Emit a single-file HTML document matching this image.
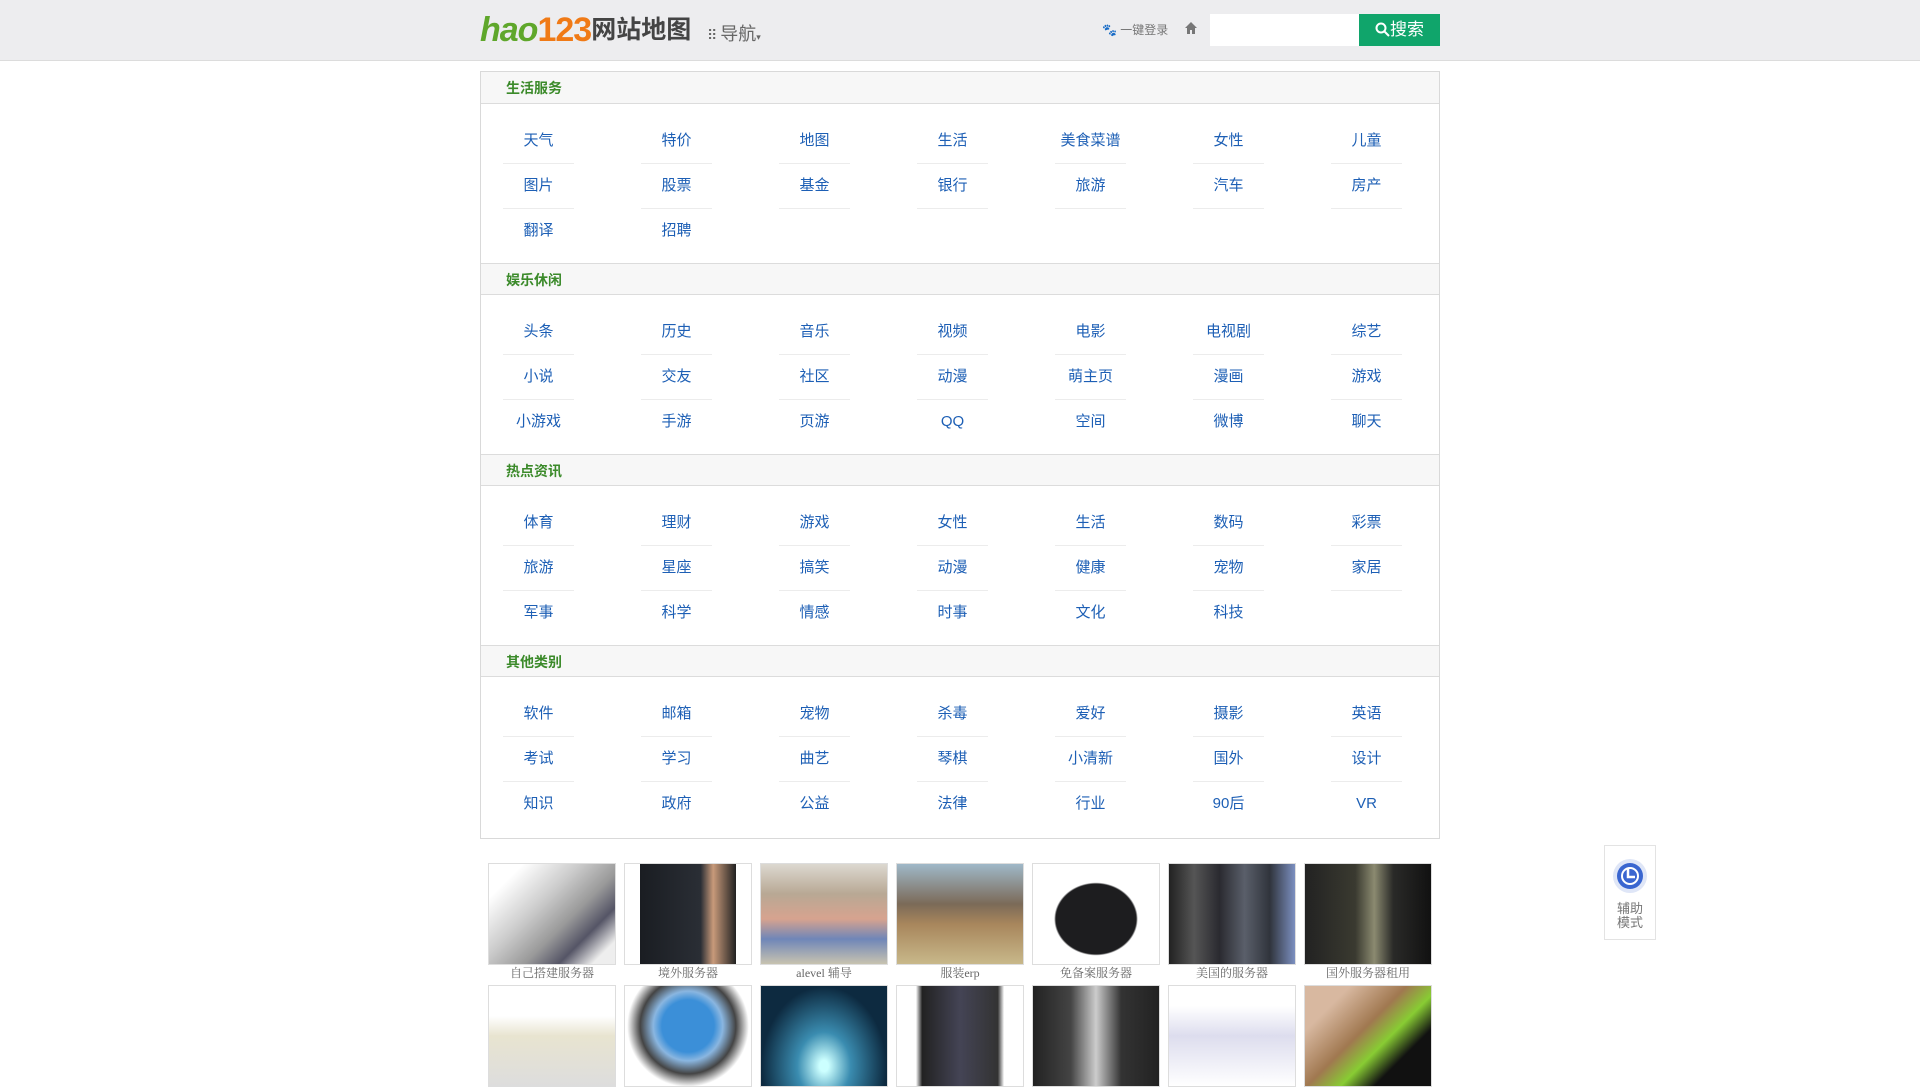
<!DOCTYPE html>
<html><head><meta charset="utf-8"><style>
*{margin:0;padding:0;box-sizing:border-box}
body{width:1920px;height:1040px;overflow:hidden;background:#fff;font-family:"Liberation Sans","Noto Sans CJK SC",sans-serif;position:relative}
.hd{height:61px;background:#ededef;border-bottom:1px solid #dcdcdc;position:relative}
.logo{position:absolute;left:480px;top:12px;font-size:34px;font-weight:bold;font-style:italic;letter-spacing:-1px;line-height:36px}
.logo .h{color:#5fa72b}.logo .n{color:#f07a16;font-style:normal}
.logo .t{color:#444;font-style:normal;font-size:25px;letter-spacing:0;vertical-align:3px}
.nav{position:absolute;left:707px;top:20px;font-size:18px;color:#666}
.login{position:absolute;left:1102px;top:21px;font-size:12px;color:#777}
.home{position:absolute;left:1184px;top:21px}
.inp{position:absolute;left:1210px;top:14px;width:149px;height:32px;background:#fff}
.btn{position:absolute;left:1359px;top:14px;width:81px;height:32px;background:#10a56b;color:#fff;font-size:17px;line-height:32px;text-align:center}
.box{position:absolute;left:480px;top:71px;width:960px;border:1px solid #d9d9d9}
.sh{height:32px;background:#f7f7f7;border-bottom:1px solid #dcdcdc;color:#3b8a2a;font-weight:bold;font-size:14px;line-height:32px;padding-left:25px}
.sec+.sec .sh{border-top:1px solid #dcdcdc}
.sc{height:159px;padding-top:15px}
.row{height:45px;display:flex;overflow:visible}
.c{width:138px;flex:0 0 138px}
.c a{display:block;margin-left:22px;width:71px;height:45px;line-height:44px;text-align:center;color:#1d5fb5;font-size:15px;text-decoration:none;border-bottom:1px solid #ececec}
.imgs{position:absolute;left:488px;top:863px}
.it{position:absolute;width:128px;height:102px;border:1px solid #ddd}
.cap{position:absolute;width:128px;text-align:center;font-size:12px;color:#666;font-family:"Liberation Serif","Noto Serif CJK SC",serif}
.acc{position:absolute;left:1604px;top:845px;width:52px;height:95px;border:1px solid #e3e3e3;background:#fff;text-align:center}
</style></head><body>
<div class="hd">
<div class="logo"><span class="h">hao</span><span class="n">123</span><span class="t">网站地图</span></div>
<div class="nav"><span style="font-size:14px;letter-spacing:-2px">⠿</span> 导航<span style="font-size:9px">▾</span></div>
<div class="login">🐾 一键登录</div>
<svg class="home" width="14" height="14" viewBox="0 0 14 14"><path d="M7 1L1 7h2v6h3V9h2v4h3V7h2z" fill="#777"/></svg>
<div class="inp"></div>
<div class="btn"><svg width="15" height="15" viewBox="0 0 15 15" style="vertical-align:-2px"><circle cx="6" cy="6" r="4.5" stroke="#fff" stroke-width="2" fill="none"/><path d="M9.5 9.5L14 14" stroke="#fff" stroke-width="2"/></svg>搜索</div>
</div>
<div class="box">
<div class="sec"><div class="sh">生活服务</div><div class="sc">
<div class="row"><div class="c"><a>天气</a></div><div class="c"><a>特价</a></div><div class="c"><a>地图</a></div><div class="c"><a>生活</a></div><div class="c"><a>美食菜谱</a></div><div class="c"><a>女性</a></div><div class="c"><a>儿童</a></div></div>
<div class="row"><div class="c"><a>图片</a></div><div class="c"><a>股票</a></div><div class="c"><a>基金</a></div><div class="c"><a>银行</a></div><div class="c"><a>旅游</a></div><div class="c"><a>汽车</a></div><div class="c"><a>房产</a></div></div>
<div class="row"><div class="c"><a style="border:0">翻译</a></div><div class="c"><a style="border:0">招聘</a></div></div>
</div></div>
<div class="sec"><div class="sh">娱乐休闲</div><div class="sc">
<div class="row"><div class="c"><a>头条</a></div><div class="c"><a>历史</a></div><div class="c"><a>音乐</a></div><div class="c"><a>视频</a></div><div class="c"><a>电影</a></div><div class="c"><a>电视剧</a></div><div class="c"><a>综艺</a></div></div>
<div class="row"><div class="c"><a>小说</a></div><div class="c"><a>交友</a></div><div class="c"><a>社区</a></div><div class="c"><a>动漫</a></div><div class="c"><a>萌主页</a></div><div class="c"><a>漫画</a></div><div class="c"><a>游戏</a></div></div>
<div class="row"><div class="c"><a style="border:0">小游戏</a></div><div class="c"><a style="border:0">手游</a></div><div class="c"><a style="border:0">页游</a></div><div class="c"><a style="border:0">QQ</a></div><div class="c"><a style="border:0">空间</a></div><div class="c"><a style="border:0">微博</a></div><div class="c"><a style="border:0">聊天</a></div></div>
</div></div>
<div class="sec"><div class="sh">热点资讯</div><div class="sc">
<div class="row"><div class="c"><a>体育</a></div><div class="c"><a>理财</a></div><div class="c"><a>游戏</a></div><div class="c"><a>女性</a></div><div class="c"><a>生活</a></div><div class="c"><a>数码</a></div><div class="c"><a>彩票</a></div></div>
<div class="row"><div class="c"><a>旅游</a></div><div class="c"><a>星座</a></div><div class="c"><a>搞笑</a></div><div class="c"><a>动漫</a></div><div class="c"><a>健康</a></div><div class="c"><a>宠物</a></div><div class="c"><a>家居</a></div></div>
<div class="row"><div class="c"><a style="border:0">军事</a></div><div class="c"><a style="border:0">科学</a></div><div class="c"><a style="border:0">情感</a></div><div class="c"><a style="border:0">时事</a></div><div class="c"><a style="border:0">文化</a></div><div class="c"><a style="border:0">科技</a></div></div>
</div></div>
<div class="sec"><div class="sh">其他类别</div><div class="sc" style="height:161px">
<div class="row"><div class="c"><a>软件</a></div><div class="c"><a>邮箱</a></div><div class="c"><a>宠物</a></div><div class="c"><a>杀毒</a></div><div class="c"><a>爱好</a></div><div class="c"><a>摄影</a></div><div class="c"><a>英语</a></div></div>
<div class="row"><div class="c"><a>考试</a></div><div class="c"><a>学习</a></div><div class="c"><a>曲艺</a></div><div class="c"><a>琴棋</a></div><div class="c"><a>小清新</a></div><div class="c"><a>国外</a></div><div class="c"><a>设计</a></div></div>
<div class="row"><div class="c"><a style="border:0">知识</a></div><div class="c"><a style="border:0">政府</a></div><div class="c"><a style="border:0">公益</a></div><div class="c"><a style="border:0">法律</a></div><div class="c"><a style="border:0">行业</a></div><div class="c"><a style="border:0">90后</a></div><div class="c"><a style="border:0">VR</a></div></div>
</div></div>
</div>
<div class="imgs">
<div class="it" style="left:0;top:0;background:linear-gradient(135deg,#fff 15%,#ccc 40%,#999 60%,#556 75%,#eee 90%)"></div>
<div class="it" style="left:136px;top:0;background:linear-gradient(90deg,#fff 12%,#1a1d22 12%,#2a2e35 60%,#c89a7a 70%,#222 88%,#fff 88%)"></div>
<div class="it" style="left:272px;top:0;background:linear-gradient(180deg,#dcd8d0 0%,#b8a894 30%,#d7a38f 55%,#6f86b8 75%,#c8c3b0 100%)"></div>
<div class="it" style="left:408px;top:0;background:linear-gradient(180deg,#9fb8c8 0%,#7b6a58 40%,#a8865c 60%,#c8b88a 100%)"></div>
<div class="it" style="left:544px;top:0;background:radial-gradient(ellipse at 50% 55%,#1d1d1f 45%,#fff 47%)"></div>
<div class="it" style="left:680px;top:0;background:linear-gradient(90deg,#222 0%,#555 20%,#2a2a30 40%,#5a5f6a 60%,#30343c 80%,#7b8fc0 100%)"></div>
<div class="it" style="left:816px;top:0;background:linear-gradient(90deg,#222 0%,#3a3a30 40%,#8b8a70 55%,#2a2a28 70%,#111 100%)"></div>
<div class="cap" style="left:0;top:101px">自己搭建服务器</div>
<div class="cap" style="left:136px;top:101px">境外服务器</div>
<div class="cap" style="left:272px;top:101px">alevel 辅导</div>
<div class="cap" style="left:408px;top:101px">服装erp</div>
<div class="cap" style="left:544px;top:101px">免备案服务器</div>
<div class="cap" style="left:680px;top:101px">美国的服务器</div>
<div class="cap" style="left:816px;top:101px">国外服务器租用</div>
<div class="it" style="left:0;top:122px;background:linear-gradient(180deg,#fff 30%,#e8e4d0 50%,#ddd 100%)"></div>
<div class="it" style="left:136px;top:122px;background:radial-gradient(circle at 50% 40%,#3b8fd8 30%,#8ab6e0 40%,#444 55%,#fff 70%)"></div>
<div class="it" style="left:272px;top:122px;background:radial-gradient(ellipse at 50% 80%,#cff 5%,#3a8cb0 30%,#0d2a40 70%)"></div>
<div class="it" style="left:408px;top:122px;background:linear-gradient(90deg,#fff 15%,#222 20%,#445 50%,#333 80%,#fff 85%)"></div>
<div class="it" style="left:544px;top:122px;background:linear-gradient(90deg,#222 0%,#444 30%,#ccc 50%,#333 70%,#222 100%)"></div>
<div class="it" style="left:680px;top:122px;background:linear-gradient(180deg,#fff 20%,#dde 50%,#fff 100%)"></div>
<div class="it" style="left:816px;top:122px;background:linear-gradient(135deg,#d8b8a0 20%,#a07850 45%,#8c3 60%,#111 75%)"></div>
</div>
<div class="acc">
<svg width="36" height="36" viewBox="0 0 36 36" style="margin-top:12px"><circle cx="18" cy="18" r="17" fill="#dfe6f7"/><circle cx="18" cy="18" r="13" fill="#3a66d0"/><circle cx="18" cy="18" r="8" fill="none" stroke="#fff" stroke-width="2"/><path d="M16 11v8h7" stroke="#fff" stroke-width="2.5" fill="none"/></svg>
<div style="font-size:13px;color:#777;line-height:14px;margin-top:3px">辅助<br>模式</div>
</div>
</body></html>
